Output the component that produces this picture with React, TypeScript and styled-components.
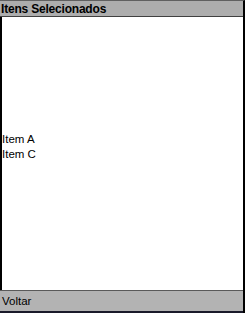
import React from "react";
import styled, { createGlobalStyle } from "styled-components";

const Global = createGlobalStyle`
  html, body { margin: 0; padding: 0; background: #ffffff; }
  body { font-family: "Liberation Sans", Arial, sans-serif; }
`;

const Screen = styled.div`
  width: 245px;
  height: 313px;
  box-sizing: border-box;
  display: flex;
  flex-direction: column;
  border-top: 1px solid #606060;
  border-right: 2px solid #000000;
  background: #ffffff;
  overflow: hidden;
`;

const TitleBar = styled.div`
  height: 15px;
  flex: none;
  display: flex;
  align-items: center;
  padding-left: 1px;
  background: #adadad;
  border-bottom: 1px solid #404040;
  font-weight: bold;
  font-size: 12px;
  color: #000;
  letter-spacing: -0.2px;
`;

const Body = styled.div`
  flex: 1;
  border-left: 2px solid #000;
  display: flex;
  flex-direction: column;
  padding-top: 115px;
`;

const Item = styled.div`
  font-size: 11.5px;
  line-height: 15px;
  color: #000;
`;

const Footer = styled.div`
  height: 20px;
  flex: none;
  display: flex;
  align-items: center;
  padding-left: 2px;
  background: #b3b3b3;
  border-top: 1px solid #5a5a5a;
  border-bottom: 2px solid #1a1a2a;
  font-size: 11.5px;
  color: #000;
`;

export default function App() {
  return (
    <>
      <Global />
      <Screen>
        <TitleBar>Itens Selecionados</TitleBar>
        <Body>
          <Item>Item A</Item>
          <Item>Item C</Item>
        </Body>
        <Footer>Voltar</Footer>
      </Screen>
    </>
  );
}
